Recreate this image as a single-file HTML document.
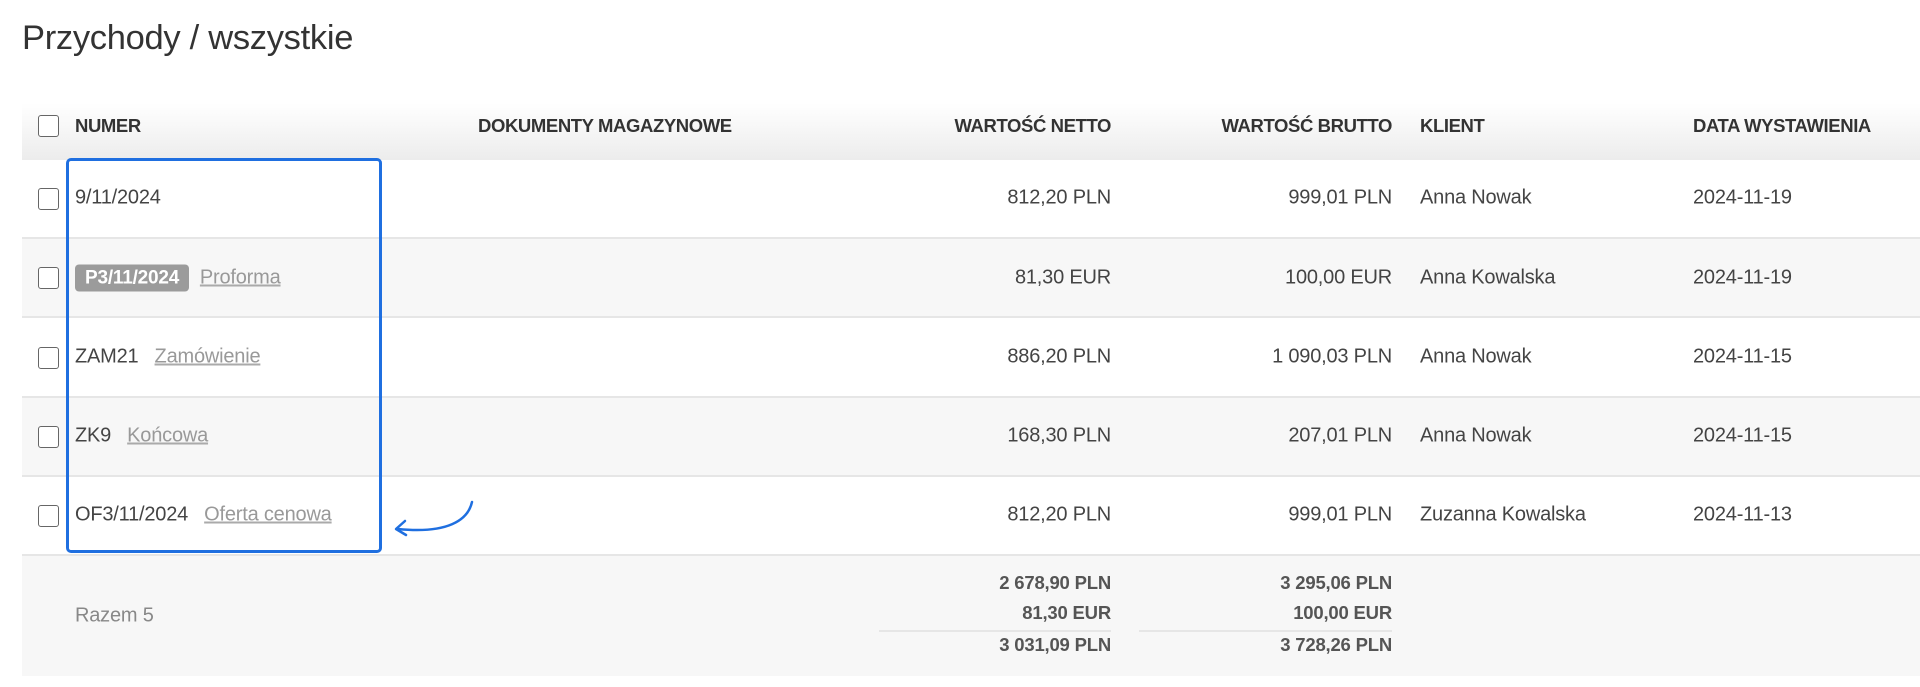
<!DOCTYPE html>
<html><head><meta charset="utf-8"><style>
*{margin:0;padding:0;box-sizing:border-box}
body{width:1920px;height:687px;background:#fff;font-family:"Liberation Sans",Arial,sans-serif;color:#444;position:relative;overflow:hidden}
.abs{position:absolute}
h1{position:absolute;left:22px;top:19px;font-size:34.5px;font-weight:normal;color:#333;letter-spacing:-0.3px}
.hdr{position:absolute;left:22px;top:103px;width:1898px;height:57px;background:linear-gradient(#fff,#ececec)}
.row{position:absolute;left:22px;width:1898px;border-bottom:2px solid #e6e6e6}
.th{position:absolute;top:126px;transform:translateY(-50%);font-size:18.5px;font-weight:bold;color:#333;white-space:nowrap;letter-spacing:-0.4px}
.cb{position:absolute;width:21px;height:22px;border:1.5px solid #666;border-radius:3px;background:#fff}
.t{position:absolute;font-size:20px;white-space:nowrap;transform:translateY(-50%);color:#444;letter-spacing:-0.2px}
.lnk{color:#999;text-decoration:underline;text-decoration-color:#aaa}
.badge{background:#9b9b9b;color:#fff;font-weight:bold;padding:3px 10px;border-radius:4px;font-size:19px}
.f{font-weight:bold;font-size:18.5px;color:#555}
</style></head><body>
<h1>Przychody / wszystkie</h1>
<div class="hdr"></div>
<div class="row" style="top:160px;height:79px;background:#fff"></div>
<div class="row" style="top:239px;height:79px;background:#f7f7f7"></div>
<div class="row" style="top:318px;height:80px;background:#fff"></div>
<div class="row" style="top:398px;height:79px;background:#f7f7f7"></div>
<div class="row" style="top:477px;height:79px;background:#fff"></div>
<div class="abs" style="left:22px;top:556px;width:1898px;height:120px;background:#f7f7f7"></div>

<div class="cb" style="left:38px;top:115px"></div>
<div class="th" style="left:75px">NUMER</div>
<div class="th" style="left:478px">DOKUMENTY MAGAZYNOWE</div>
<div class="th" style="right:809px">WARTOŚĆ NETTO</div>
<div class="th" style="right:528px">WARTOŚĆ BRUTTO</div>
<div class="th" style="left:1420px">KLIENT</div>
<div class="th" style="left:1693px">DATA WYSTAWIENIA</div>

<div class="cb" style="left:38px;top:188px"></div>
<div class="t" style="left:75px;top:198px">9/11/2024</div>
<div class="t" style="right:809px;top:198px">812,20 PLN</div>
<div class="t" style="right:528px;top:198px">999,01 PLN</div>
<div class="t" style="left:1420px;top:198px">Anna Nowak</div>
<div class="t" style="left:1693px;top:198px">2024-11-19</div>

<div class="cb" style="left:38px;top:267px"></div>
<div class="t" style="left:75px;top:278px"><span class="badge">P3/11/2024</span>&nbsp;&nbsp;<span class="lnk">Proforma</span></div>
<div class="t" style="right:809px;top:278px">81,30 EUR</div>
<div class="t" style="right:528px;top:278px">100,00 EUR</div>
<div class="t" style="left:1420px;top:278px">Anna Kowalska</div>
<div class="t" style="left:1693px;top:278px">2024-11-19</div>

<div class="cb" style="left:38px;top:347px"></div>
<div class="t" style="left:75px;top:357px">ZAM21&nbsp;&nbsp;&nbsp;<span class="lnk">Zamówienie</span></div>
<div class="t" style="right:809px;top:357px">886,20 PLN</div>
<div class="t" style="right:528px;top:357px">1 090,03 PLN</div>
<div class="t" style="left:1420px;top:357px">Anna Nowak</div>
<div class="t" style="left:1693px;top:357px">2024-11-15</div>

<div class="cb" style="left:38px;top:426px"></div>
<div class="t" style="left:75px;top:436px">ZK9&nbsp;&nbsp;&nbsp;<span class="lnk">Końcowa</span></div>
<div class="t" style="right:809px;top:436px">168,30 PLN</div>
<div class="t" style="right:528px;top:436px">207,01 PLN</div>
<div class="t" style="left:1420px;top:436px">Anna Nowak</div>
<div class="t" style="left:1693px;top:436px">2024-11-15</div>

<div class="cb" style="left:38px;top:505px"></div>
<div class="t" style="left:75px;top:515px">OF3/11/2024&nbsp;&nbsp;&nbsp;<span class="lnk">Oferta cenowa</span></div>
<div class="t" style="right:809px;top:515px">812,20 PLN</div>
<div class="t" style="right:528px;top:515px">999,01 PLN</div>
<div class="t" style="left:1420px;top:515px">Zuzanna Kowalska</div>
<div class="t" style="left:1693px;top:515px">2024-11-13</div>

<div class="t" style="left:75px;top:616px;color:#888">Razem 5</div>
<div class="t f" style="right:809px;top:583px">2 678,90 PLN</div>
<div class="t f" style="right:809px;top:613px">81,30 EUR</div>
<div class="t f" style="right:809px;top:645px">3 031,09 PLN</div>
<div class="t f" style="right:528px;top:583px">3 295,06 PLN</div>
<div class="t f" style="right:528px;top:613px">100,00 EUR</div>
<div class="t f" style="right:528px;top:645px">3 728,26 PLN</div>
<div class="abs" style="left:879px;top:630px;width:232px;height:2px;background:#e6e6e6"></div>
<div class="abs" style="left:1139px;top:630px;width:253px;height:2px;background:#e6e6e6"></div>

<div class="abs" style="left:66px;top:158px;width:316px;height:395px;border:3px solid #1f6fe0;border-radius:5px"></div>
<svg class="abs" style="left:388px;top:498px" width="90" height="40" viewBox="0 0 90 40">
<path d="M84 4 C80 22 60 36 10 31" fill="none" stroke="#1f6fe0" stroke-width="2.5" stroke-linecap="round"/>
<path d="M17 23 L8 31 L18 37" fill="none" stroke="#1f6fe0" stroke-width="2.5" stroke-linecap="round" stroke-linejoin="round"/>
</svg>
</body></html>
